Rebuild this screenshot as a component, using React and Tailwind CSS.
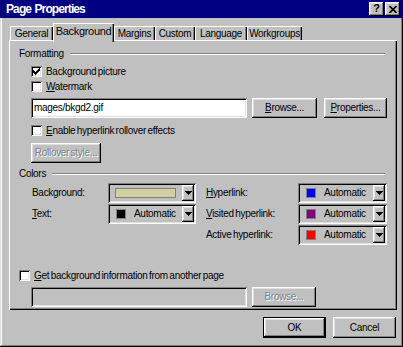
import React from "react";

const raised =
  "shadow-[inset_-1px_-1px_0_#000,inset_1px_1px_0_#fff,inset_-2px_-2px_0_#808080,inset_2px_2px_0_#dfdfdf]";
const sunken =
  "shadow-[inset_1px_1px_0_#808080,inset_-1px_-1px_0_#fff,inset_2px_2px_0_#000,inset_-2px_-2px_0_#dfdfdf]";

function U({ children }) {
  return <span className="underline underline-offset-[1px] decoration-[1px]">{children}</span>;
}

function Checkbox({ checked }) {
  return (
    <div className={`w-[11px] h-[11px] bg-white ${sunken} flex items-center justify-center shrink-0`}>
      {checked && (
        <svg width="7" height="7" viewBox="0 0 7 7" shapeRendering="crispEdges">
          <rect x="0" y="2" width="1" height="3" fill="#000" />
          <rect x="1" y="3" width="1" height="3" fill="#000" />
          <rect x="2" y="4" width="1" height="3" fill="#000" />
          <rect x="3" y="3" width="1" height="3" fill="#000" />
          <rect x="4" y="2" width="1" height="3" fill="#000" />
          <rect x="5" y="1" width="1" height="3" fill="#000" />
          <rect x="6" y="0" width="1" height="3" fill="#000" />
        </svg>
      )}
    </div>
  );
}

function Arrow() {
  return (
    <svg width="7" height="4" viewBox="0 0 7 4" shapeRendering="crispEdges">
      <rect x="0" y="0" width="7" height="1" fill="#000" />
      <rect x="1" y="1" width="5" height="1" fill="#000" />
      <rect x="2" y="2" width="3" height="1" fill="#000" />
      <rect x="3" y="3" width="1" height="1" fill="#000" />
    </svg>
  );
}

function ColorSelect({ color, wide, width }) {
  return (
    <div className={`${width} h-[20px] ${sunken} bg-[#c0c0c0] flex items-center p-[2px] shrink-0`}>
      <div className="flex-1 flex items-center h-full">
        {wide ? (
          <div className="ml-[5px] w-[61px] h-[10px] border border-[#808080]" style={{ background: color }} />
        ) : (
          <>
            <div className="ml-[6px] w-[10px] h-[10px] border border-[#808080]" style={{ background: color }} />
            <span className="ml-[8px]">Automatic</span>
          </>
        )}
      </div>
      <div className={`w-[12px] h-full bg-[#c0c0c0] ${raised} flex items-center justify-center`}>
        <Arrow />
      </div>
    </div>
  );
}

function Btn({ children, className = "", disabled }) {
  return (
    <div
      className={`h-[20px] bg-[#c0c0c0] ${raised} flex items-center justify-center shrink-0 ${
        disabled ? "text-[#808080] [text-shadow:1px_1px_0_#fff]" : ""
      } ${className}`}
    >
      {children}
    </div>
  );
}

function GroupHeader({ label }) {
  return (
    <div className="h-[12px] pl-[10px] pr-[12px] flex items-center">
      <span>{label}</span>
      <div className="flex-1 ml-[6px] h-[2px] border-t border-b border-t-[#808080] border-b-white" />
    </div>
  );
}

function Tab({ label, width, selected }) {
  if (selected) {
    return (
      <div
        className={`${width} h-[19px] -mb-[2px] relative z-10 bg-[#c0c0c0] shadow-[inset_1px_1px_0_#fff,inset_-1px_0_0_#000,inset_-2px_0_0_#808080] flex items-start justify-center pt-[3px] text-[11px] tracking-[-0.3px]`}
      >
        {label}
      </div>
    );
  }
  return (
    <div
      className={`${width} h-[14px] bg-[#c0c0c0] shadow-[inset_1px_1px_0_#fff,inset_-1px_0_0_#000,inset_-2px_0_0_#808080] flex items-center justify-center pt-[1px]`}
    >
      {label}
    </div>
  );
}

export default function App() {
  return (
    <div className="w-[403px] h-[347px] bg-[#c0c0c0] flex flex-col font-['Liberation_Sans',Arial,sans-serif] text-[10px] tracking-[-0.3px] [word-spacing:-1px] text-black leading-none overflow-hidden select-none shadow-[inset_-1px_-1px_0_#000,inset_1px_1px_0_#dfdfdf,inset_-2px_-2px_0_#808080,inset_2px_2px_0_#fff]">
      {/* Title bar */}
      <div className="h-[18px] bg-[#000080] flex items-center pl-[6px] pr-[3px] shrink-0">
        <span className="text-white font-bold text-[12px] tracking-[-0.9px] [word-spacing:1px]">Page Properties</span>
        <div className="ml-auto flex gap-[1px]">
          <div className={`w-[15px] h-[14px] bg-[#c0c0c0] ${raised} flex items-center justify-center font-bold text-[11px] pb-[1px]`}>
            ?
          </div>
          <div className={`w-[15px] h-[14px] bg-[#c0c0c0] ${raised} flex items-center justify-center`}>
            <svg width="8" height="7" viewBox="0 0 8 7">
              <path d="M0.5 0 L7.5 7 M7.5 0 L0.5 7" stroke="#000" strokeWidth="1.6" />
            </svg>
          </div>
        </div>
      </div>

      {/* Tabs */}
      <div className="mt-[5px] h-[17px] pl-[10px] flex items-end shrink-0">
        <Tab label="General" width="w-[43px]" />
        <Tab label="Background" width="w-[61px]" selected />
        <Tab label="Margins" width="w-[41px]" />
        <Tab label="Custom" width="w-[40px]" />
        <Tab label="Language" width="w-[52px]" />
        <Tab label="Workgroups" width="w-[55px]" />
      </div>

      {/* Panel */}
      <div className="ml-[9px] w-[388px] h-[270px] shrink-0 flex flex-col shadow-[inset_1px_1px_0_#fff,inset_-1px_-1px_0_#000,inset_-2px_-2px_0_#808080]">
        <div className="mt-[8px]">
          <GroupHeader label="Formatting" />
        </div>

        <div className="mt-[6px] pl-[22px] h-[11px] flex items-center gap-[4px]">
          <Checkbox checked />
          <span>Background picture</span>
        </div>
        <div className="mt-[4px] pl-[22px] h-[11px] flex items-center gap-[4px]">
          <Checkbox />
          <span>
            <U>W</U>atermark
          </span>
        </div>

        <div className="mt-[6px] pl-[22px] h-[20px] flex items-center">
          <div className={`w-[216px] h-[20px] bg-white ${sunken} flex items-center pl-[3px]`}>mages/bkgd2.gif</div>
          <Btn className="ml-[5px] w-[65px]">
            <span>
              <U>B</U>rowse...
            </span>
          </Btn>
          <Btn className="ml-[7px] w-[63px]">
            <span>
              <U>P</U>roperties...
            </span>
          </Btn>
        </div>

        <div className="mt-[7px] pl-[22px] h-[11px] flex items-center gap-[4px]">
          <Checkbox />
          <span>
            <U>E</U>nable hyperlink rollover effects
          </span>
        </div>

        <div className="mt-[7px] pl-[22px]">
          <Btn disabled className="w-[70px] h-[18px]">
            Rollover style...
          </Btn>
        </div>

        <div className="mt-[5px]">
          <GroupHeader label="Colors" />
        </div>

        <div className="mt-[3px] flex">
          <div className="pl-[23px] flex flex-col gap-[1px]">
            <div className="h-[20px] flex items-center">
              <span className="w-[76px]">Background:</span>
              <ColorSelect color="#d0d0a0" wide width="w-[88px]" />
            </div>
            <div className="h-[20px] flex items-center">
              <span className="w-[76px]">
                <U>T</U>ext:
              </span>
              <ColorSelect color="#000" width="w-[88px]" />
            </div>
          </div>
          <div className="ml-[10px] flex flex-col gap-[1px]">
            <div className="h-[20px] flex items-center">
              <span className="w-[92px]">
                <U>H</U>yperlink:
              </span>
              <ColorSelect color="#0000ff" width="w-[89px]" />
            </div>
            <div className="h-[20px] flex items-center">
              <span className="w-[92px]">
                <U>V</U>isited hyperlink:
              </span>
              <ColorSelect color="#800080" width="w-[89px]" />
            </div>
            <div className="h-[20px] flex items-center">
              <span className="w-[92px]">Active hyperlink:</span>
              <ColorSelect color="#ff0000" width="w-[89px]" />
            </div>
          </div>
        </div>

        <div className="mt-[25px] pl-[10px] h-[11px] flex items-center gap-[4px]">
          <Checkbox />
          <span>
            <U>G</U>et background information from another page
          </span>
        </div>

        <div className="mt-[6px] pl-[22px] h-[20px] flex items-center">
          <div className={`w-[216px] h-[20px] bg-[#c0c0c0] ${sunken}`} />
          <Btn disabled className="ml-[5px] w-[64px]">
            Browse...
          </Btn>
        </div>
      </div>

      {/* Bottom buttons */}
      <div className="mt-[7px] flex justify-end pr-[7px] gap-[7px]">
        <div className="w-[63px] h-[21px] border border-black flex">
          <Btn className="flex-1 h-full">OK</Btn>
        </div>
        <Btn className="w-[63px] h-[21px]">Cancel</Btn>
      </div>
    </div>
  );
}
